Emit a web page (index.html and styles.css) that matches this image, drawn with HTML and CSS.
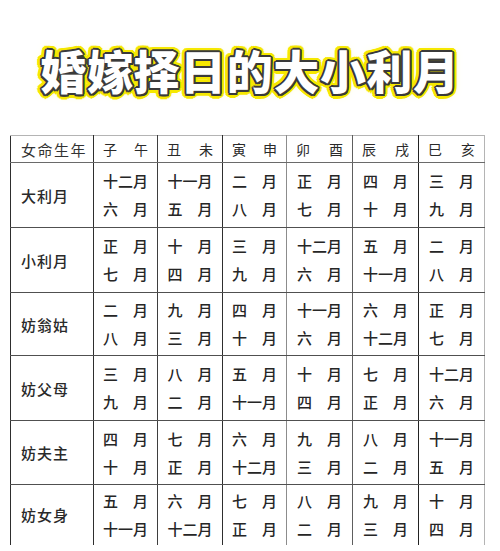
FILE: index.html
```html
<!DOCTYPE html>
<html lang="zh-CN">
<head>
<meta charset="utf-8">
<title>婚嫁择日的大小利月</title>
<link rel="stylesheet" href="styles.css">
</head>
<body>
<div class="page">
  <header class="head">
    <h1 class="title">婚嫁择日的大小利月</h1>
  </header>
  <div class="sheet">
    <table class="months">
      <colgroup>
        <col class="c-label"><col class="c-mon"><col class="c-mon2"><col class="c-mon"><col class="c-mon3"><col class="c-mon3"><col class="c-mon3">
      </colgroup>
      <thead>
        <tr class="hrow">
          <th class="lab h1">女命生年</th>
          <th class="hc v2"><div class="pair"><span>子</span><span>午</span></div></th>
          <th class="hc v3"><div class="pair"><span>丑</span><span>未</span></div></th>
          <th class="hc v4"><div class="pair"><span>寅</span><span>申</span></div></th>
          <th class="hc v5"><div class="pair"><span>卯</span><span>酉</span></div></th>
          <th class="hc v6"><div class="pair"><span>辰</span><span>戌</span></div></th>
          <th class="hc v7"><div class="pair"><span>巳</span><span>亥</span></div></th>
        </tr>
      </thead>
      <tbody>
        <tr class="r65">
          <th class="lab">大利月</th>
          <td class="v2"><span class="ln">十二月</span><span class="ln">六　月</span></td>
          <td class="v3"><span class="ln">十一月</span><span class="ln">五　月</span></td>
          <td class="v4"><span class="ln">二　月</span><span class="ln">八　月</span></td>
          <td class="v5"><span class="ln">正　月</span><span class="ln">七　月</span></td>
          <td class="v6"><span class="ln">四　月</span><span class="ln">十　月</span></td>
          <td class="v7"><span class="ln">三　月</span><span class="ln">九　月</span></td>
        </tr>
        <tr class="r65">
          <th class="lab">小利月</th>
          <td class="v2"><span class="ln">正　月</span><span class="ln">七　月</span></td>
          <td class="v3"><span class="ln">十　月</span><span class="ln">四　月</span></td>
          <td class="v4"><span class="ln">三　月</span><span class="ln">九　月</span></td>
          <td class="v5"><span class="ln">十二月</span><span class="ln">六　月</span></td>
          <td class="v6"><span class="ln">五　月</span><span class="ln">十一月</span></td>
          <td class="v7"><span class="ln">二　月</span><span class="ln">八　月</span></td>
        </tr>
        <tr class="r63">
          <th class="lab">妨翁姑</th>
          <td class="v2"><span class="ln">二　月</span><span class="ln">八　月</span></td>
          <td class="v3"><span class="ln">九　月</span><span class="ln">三　月</span></td>
          <td class="v4"><span class="ln">四　月</span><span class="ln">十　月</span></td>
          <td class="v5"><span class="ln">十一月</span><span class="ln">六　月</span></td>
          <td class="v6"><span class="ln">六　月</span><span class="ln">十二月</span></td>
          <td class="v7"><span class="ln">正　月</span><span class="ln">七　月</span></td>
        </tr>
        <tr class="r65">
          <th class="lab">妨父母</th>
          <td class="v2"><span class="ln">三　月</span><span class="ln">九　月</span></td>
          <td class="v3"><span class="ln">八　月</span><span class="ln">二　月</span></td>
          <td class="v4"><span class="ln">五　月</span><span class="ln">十一月</span></td>
          <td class="v5"><span class="ln">十　月</span><span class="ln">四　月</span></td>
          <td class="v6"><span class="ln">七　月</span><span class="ln">正　月</span></td>
          <td class="v7"><span class="ln">十二月</span><span class="ln">六　月</span></td>
        </tr>
        <tr class="r64">
          <th class="lab">妨夫主</th>
          <td class="v2"><span class="ln">四　月</span><span class="ln">十　月</span></td>
          <td class="v3"><span class="ln">七　月</span><span class="ln">正　月</span></td>
          <td class="v4"><span class="ln">六　月</span><span class="ln">十二月</span></td>
          <td class="v5"><span class="ln">九　月</span><span class="ln">三　月</span></td>
          <td class="v6"><span class="ln">八　月</span><span class="ln">二　月</span></td>
          <td class="v7"><span class="ln">十一月</span><span class="ln">五　月</span></td>
        </tr>
        <tr class="r61 last">
          <th class="lab">妨女身</th>
          <td class="v2"><span class="ln">五　月</span><span class="ln">十一月</span></td>
          <td class="v3"><span class="ln">六　月</span><span class="ln">十二月</span></td>
          <td class="v4"><span class="ln">七　月</span><span class="ln">正　月</span></td>
          <td class="v5"><span class="ln">八　月</span><span class="ln">二　月</span></td>
          <td class="v6"><span class="ln">九　月</span><span class="ln">三　月</span></td>
          <td class="v7"><span class="ln">十　月</span><span class="ln">四　月</span></td>
        </tr>
      </tbody>
    </table>
  </div>
</div>
</body>
</html>
```

FILE: styles.css
```css
html, body {
  margin: 0;
  padding: 0;
  background: #ffffff;
}

body {
  width: 500px;
  height: 551px;
  overflow: hidden;
  font-family: "Noto Sans CJK SC", "Noto Sans", sans-serif;
  color: #1e1e1e;
}

.page {
  display: flex;
  flex-direction: column;
}

.head {
  height: 135px;
  display: flex;
  align-items: center;
  justify-content: center;
}

.title {
  margin: 0;
  padding-top: 2px;
  font-size: 46px;
  font-weight: 900;
  line-height: 1;
  letter-spacing: 0.6px;
  color: #ffffff;
  text-shadow:
    2px 0 0 #3a3a3a, -2px 0 0 #3a3a3a, 0 2px 0 #3a3a3a, 0 -2px 0 #3a3a3a,
    1.5px 1.5px 0 #3a3a3a, -1.5px 1.5px 0 #3a3a3a, 1.5px -1.5px 0 #3a3a3a, -1.5px -1.5px 0 #3a3a3a,
    4.5px 0 0 #f6e800, -4.5px 0 0 #f6e800, 0 4.5px 0 #f6e800, 0 -4.5px 0 #f6e800,
    3.2px 3.2px 0 #f6e800, -3.2px 3.2px 0 #f6e800, 3.2px -3.2px 0 #f6e800, -3.2px -3.2px 0 #f6e800,
    4px 2px 0 #f6e800, -4px 2px 0 #f6e800, 4px -2px 0 #f6e800, -4px -2px 0 #f6e800,
    2px 4px 0 #f6e800, -2px 4px 0 #f6e800, 2px -4px 0 #f6e800, -2px -4px 0 #f6e800,
    0 0 8px #fff27a;
}

.sheet {
  padding-left: 10px;
}

.months {
  border-collapse: collapse;
  table-layout: fixed;
  width: 474px;
  border-left: 1px solid #2e2e2e;
  border-top: 1px solid #b4b4b4;
}

.c-label { width: 83px; }
.c-mon { width: 64px; }
.c-mon2 { width: 65px; }
.c-mon3 { width: 66px; }

.months th,
.months td {
  padding: 0;
  border-bottom: 1px solid #505050;
  vertical-align: middle;
}

.hrow { height: 27px; }
.r65 { height: 65px; }
.r64 { height: 64px; }
.r63 { height: 63px; }
.r61 { height: 60px; }

.months tr.last th,
.months tr.last td {
  border-bottom: none;
}

.hrow th {
  border-bottom-color: #6a6a6a;
}

.lab {
  text-align: left;
  padding-left: 10px !important;
  font-size: 15px;
  font-weight: 500;
  letter-spacing: 1px;
  color: #2a2a2a;
  border-right: 1px solid #2e2e2e;
}

.h1 {
  font-weight: 400;
  letter-spacing: 1.5px;
  color: #333333;
}

.hc {
  font-size: 14px;
  font-weight: 400;
  color: #2a2a2a;
}

.months th.hc {
  padding: 0 9px;
}

.pair {
  display: flex;
  justify-content: space-between;
  align-items: center;
}

.v2 { border-right: 1px solid #3e3e3e; }
.v3 { border-right: 1px solid #2e2e2e; }
.v4 { border-right: 1px solid #8c8c8c; }
.v5 { border-right: 1px solid #5e5e5e; }
.v6 { border-right: 1px solid #222222; }
.v7 { border-right: 1px solid #b4b4b4; }

.months td {
  text-align: center;
  font-size: 15px;
  font-weight: 500;
  color: #262626;
}

.ln {
  display: block;
  line-height: 28px;
  letter-spacing: 0;
}
```
